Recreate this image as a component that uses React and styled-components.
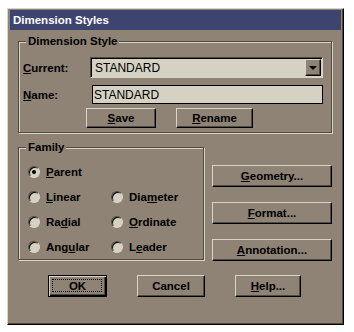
import React from "react";
import styled, { createGlobalStyle, css } from "styled-components";

const C = {
  bg: "#8e8374",
  light: "#d9d5c6",
  dark: "#514b3f",
  field: "#d5d2c3",
  title: "#3e4470",
};

const font = `"Liberation Sans", Arial, sans-serif`;

const Global = createGlobalStyle`
  html, body { margin: 0; background: #fff; }
  body { font-family: ${font}; }
`;

const Page = styled.div`
  padding: 8px 0 0 7px;
`;

const Window = styled.div`
  width: 337px;
  height: 317px;
  box-sizing: border-box;
  background: ${C.bg};
  border: 1px solid;
  border-color: ${C.light} #000 #000 ${C.light};
  box-shadow: inset -1px -1px 0 ${C.dark};
  padding: 1px 2px 0 2px;
  display: flex;
  flex-direction: column;
`;

const TitleBar = styled.div`
  height: 20px;
  flex: none;
  background: ${C.title};
  color: #fff;
  font: bold 11.5px ${font};
  display: flex;
  align-items: center;
  padding-left: 3px;
`;

const Content = styled.div`
  padding-left: 8px;
  display: flex;
  flex-direction: column;
`;

const GroupBox = styled.div`
  position: relative;
  box-sizing: border-box;
  width: ${(p) => p.$w}px;
  height: ${(p) => p.$h}px;
  margin-top: ${(p) => p.$mt || 0}px;
  border: 1px solid ${C.dark};
  box-shadow: inset 1px 1px 0 ${C.light}, 1px 1px 0 ${C.light};
  padding: ${(p) => p.$pad};
`;

const Legend = styled.span`
  position: absolute;
  top: -8px;
  left: 7px;
  padding: 0 2px;
  background: ${C.bg};
  font: bold 11.5px/14px ${font};
  color: #000;
`;

const Row = styled.div`
  display: flex;
  align-items: center;
  margin-top: ${(p) => p.$mt || 0}px;
`;

const Label = styled.span`
  width: 67px;
  flex: none;
  font: bold 11.5px ${font};
  color: #000;
`;

const Mn = styled.span`
  text-decoration: underline;
  text-decoration-thickness: 1px;
  text-underline-offset: 1px;
`;

const Combo = styled.div`
  box-sizing: border-box;
  width: 233px;
  height: 21px;
  border: 1px solid;
  border-color: ${C.dark} ${C.light} ${C.light} ${C.dark};
  box-shadow: inset 1px 1px 0 #000;
  background: ${C.field};
  padding: 1px 1px 1px 1px;
  display: flex;
  align-items: center;
`;

const FieldText = styled.span`
  flex: 1;
  padding-left: 3px;
  font: 12px ${font};
  color: #000;
`;

const DropBtn = styled.div`
  box-sizing: border-box;
  width: 16px;
  height: 17px;
  background: ${C.bg};
  border: 1px solid;
  border-color: ${C.light} #000 #000 ${C.light};
  box-shadow: inset -1px -1px 0 ${C.dark};
  display: flex;
  align-items: center;
  justify-content: center;
`;

const Arrow = styled.span`
  width: 0;
  height: 0;
  border-left: 4px solid transparent;
  border-right: 4px solid transparent;
  border-top: 4px solid #000;
  margin-top: 1px;
`;

const TextField = styled.div`
  box-sizing: border-box;
  width: 231px;
  height: 19px;
  margin-left: 2px;
  border: 1px solid #000;
  background: ${C.field};
  display: flex;
  align-items: center;
  padding-left: 1px;
  font: 12px ${font};
  color: #000;
`;

const ButtonRow = styled.div`
  display: flex;
  gap: ${(p) => p.$gap}px;
  margin-top: ${(p) => p.$mt || 0}px;
  padding-left: ${(p) => p.$pl || 0}px;
`;

const Button = styled.div`
  position: relative;
  box-sizing: border-box;
  width: ${(p) => p.$w}px;
  height: ${(p) => p.$h || 22}px;
  flex: none;
  background: ${C.bg};
  border: 1px solid;
  border-color: ${C.light} #000 #000 ${C.light};
  box-shadow: inset -1px -1px 0 ${C.dark};
  display: flex;
  align-items: center;
  justify-content: center;
  font: bold 11.5px ${font};
  color: #000;
  ${(p) =>
    p.$default &&
    css`
      border-color: #000;
      box-shadow: inset 1px 1px 0 ${C.light}, inset -1px -1px 0 #000,
        inset -2px -2px 0 ${C.dark};
      &::after {
        content: "";
        position: absolute;
        inset: 3px 4px 4px 3px;
        border: 1px dotted #000;
      }
    `}
`;

const Middle = styled.div`
  display: flex;
  align-items: flex-start;
  margin-top: 14px;
`;

const RadioGrid = styled.div`
  display: grid;
  grid-template-columns: 83px auto;
  grid-auto-rows: 20px;
  row-gap: 5px;
`;

const RadioItem = styled.div`
  display: flex;
  align-items: center;
  gap: 6px;
  font: bold 11.5px ${font};
  color: #000;
`;

const Circle = styled.span`
  box-sizing: border-box;
  width: 12px;
  height: 12px;
  flex: none;
  border-radius: 50%;
  border: 1px solid;
  border-color: ${C.dark} ${C.light} ${C.light} ${C.dark};
  box-shadow: inset 1px 1px 0 #000;
  background: ${C.field};
  display: flex;
  align-items: center;
  justify-content: center;
  &::after {
    content: "";
    width: 4px;
    height: 4px;
    border-radius: 50%;
    background: ${(p) => (p.$on ? "#000" : "transparent")};
  }
`;

const SideButtons = styled.div`
  display: flex;
  flex-direction: column;
  gap: 15px;
  margin-left: 8px;
  padding-top: 18px;
`;

function Radio({ on, children }) {
  return (
    <RadioItem>
      <Circle $on={on} />
      <span>{children}</span>
    </RadioItem>
  );
}

export default function App() {
  return (
    <>
      <Global />
      <Page>
        <Window>
          <TitleBar>Dimension Styles</TitleBar>
          <Content>
            <GroupBox $w={314} $h={92} $mt={11} $pad="15px 0 0 4px">
              <Legend>Dimension Style</Legend>
              <Row>
                <Label>
                  <Mn>C</Mn>urrent:
                </Label>
                <Combo>
                  <FieldText>STANDARD</FieldText>
                  <DropBtn>
                    <Arrow />
                  </DropBtn>
                </Combo>
              </Row>
              <Row $mt={7}>
                <Label>
                  <Mn>N</Mn>ame:
                </Label>
                <TextField>STANDARD</TextField>
              </Row>
              <ButtonRow $gap={20} $mt={4} $pl={63}>
                <Button $w={70} $h={20}>
                  <span>
                    <Mn>S</Mn>ave
                  </span>
                </Button>
                <Button $w={77} $h={20}>
                  <span>
                    <Mn>R</Mn>ename
                  </span>
                </Button>
              </ButtonRow>
            </GroupBox>

            <Middle>
              <GroupBox $w={186} $h={113} $pad="14px 0 0 9px">
                <Legend>Family</Legend>
                <RadioGrid>
                  <Radio on>
                    <Mn>P</Mn>arent
                  </Radio>
                  <span />
                  <Radio>
                    <Mn>L</Mn>inear
                  </Radio>
                  <Radio>
                    Dia<Mn>m</Mn>eter
                  </Radio>
                  <Radio>
                    Ra<Mn>d</Mn>ial
                  </Radio>
                  <Radio>
                    <Mn>O</Mn>rdinate
                  </Radio>
                  <Radio>
                    Ang<Mn>u</Mn>lar
                  </Radio>
                  <Radio>
                    L<Mn>e</Mn>ader
                  </Radio>
                </RadioGrid>
              </GroupBox>
              <SideButtons>
                <Button $w={120}>
                  <span>
                    <Mn>G</Mn>eometry...
                  </span>
                </Button>
                <Button $w={120}>
                  <span>
                    <Mn>F</Mn>ormat...
                  </span>
                </Button>
                <Button $w={120}>
                  <span>
                    <Mn>A</Mn>nnotation...
                  </span>
                </Button>
              </SideButtons>
            </Middle>

            <ButtonRow $gap={30} $mt={14} $pl={30}>
              <Button $w={59} $default>
                OK
              </Button>
              <Button $w={68}>Cancel</Button>
              <Button $w={66}>
                <span>
                  <Mn>H</Mn>elp...
                </span>
              </Button>
            </ButtonRow>
          </Content>
        </Window>
      </Page>
    </>
  );
}
